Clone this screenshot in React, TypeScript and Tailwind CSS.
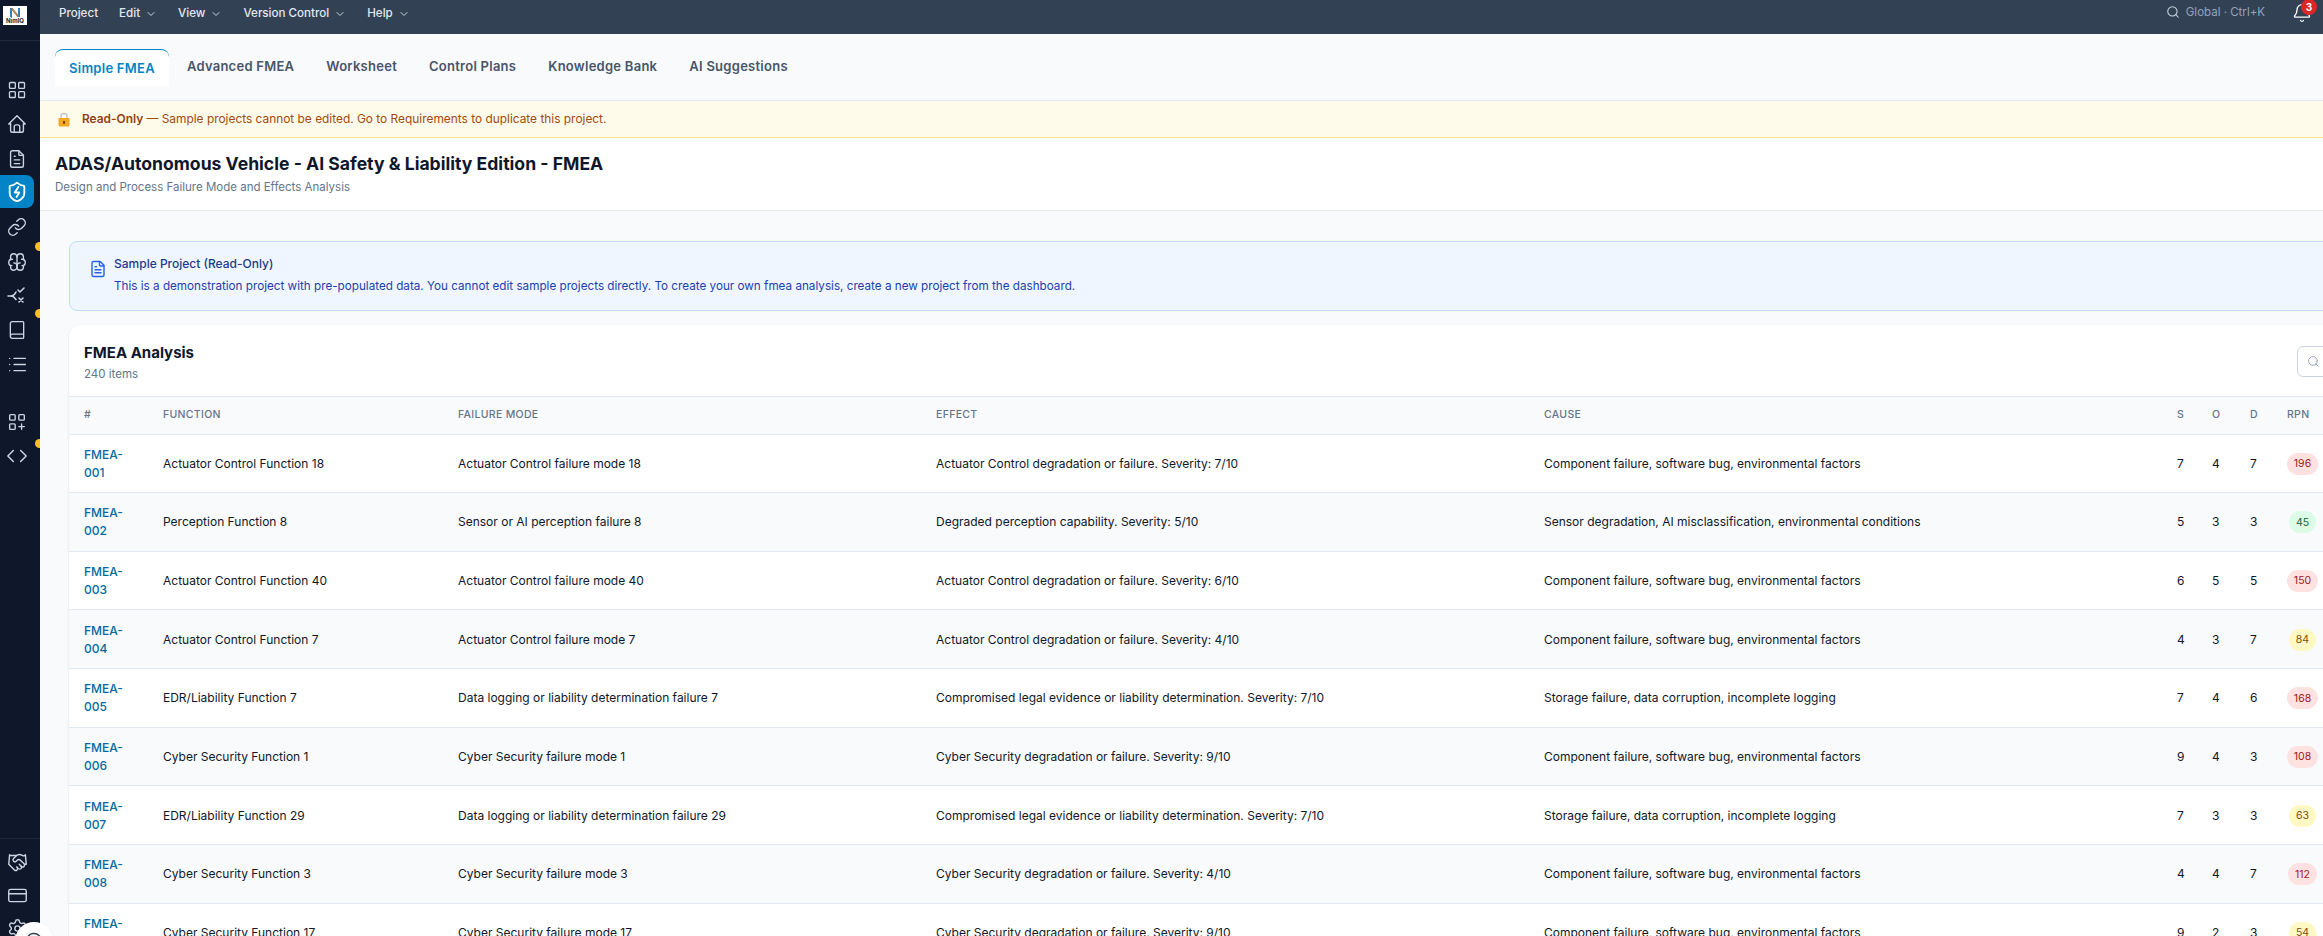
import {
  Bell,
  Book,
  ChevronDown,
  Code,
  CreditCard,
  FileText,
  Handshake,
  LayoutGrid,
  Link,
  List,
  MessageCircle,
  Search,
  Settings,
} from 'lucide-react';
import {
  TbBrain,
  TbFileText,
  TbHome,
  TbLayoutGridAdd,
} from 'react-icons/tb';

const menus = [
  { label: 'Project', caret: false },
  { label: 'Edit', caret: true },
  { label: 'View', caret: true },
  { label: 'Version Control', caret: true },
  { label: 'Help', caret: true },
];

const tabs = ['Simple FMEA', 'Advanced FMEA', 'Worksheet', 'Control Plans', 'Knowledge Bank', 'AI Suggestions'];

const actuatorCause = 'Component failure, software bug, environmental factors';

const rows = [
  { id: '001', fn: 'Actuator Control Function 18', mode: 'Actuator Control failure mode 18', effect: 'Actuator Control degradation or failure. Severity: 7/10', cause: actuatorCause, s: 7, o: 4, d: 7, rpn: 196 },
  { id: '002', fn: 'Perception Function 8', mode: 'Sensor or AI perception failure 8', effect: 'Degraded perception capability. Severity: 5/10', cause: 'Sensor degradation, AI misclassification, environmental conditions', s: 5, o: 3, d: 3, rpn: 45 },
  { id: '003', fn: 'Actuator Control Function 40', mode: 'Actuator Control failure mode 40', effect: 'Actuator Control degradation or failure. Severity: 6/10', cause: actuatorCause, s: 6, o: 5, d: 5, rpn: 150 },
  { id: '004', fn: 'Actuator Control Function 7', mode: 'Actuator Control failure mode 7', effect: 'Actuator Control degradation or failure. Severity: 4/10', cause: actuatorCause, s: 4, o: 3, d: 7, rpn: 84 },
  { id: '005', fn: 'EDR/Liability Function 7', mode: 'Data logging or liability determination failure 7', effect: 'Compromised legal evidence or liability determination. Severity: 7/10', cause: 'Storage failure, data corruption, incomplete logging', s: 7, o: 4, d: 6, rpn: 168 },
  { id: '006', fn: 'Cyber Security Function 1', mode: 'Cyber Security failure mode 1', effect: 'Cyber Security degradation or failure. Severity: 9/10', cause: actuatorCause, s: 9, o: 4, d: 3, rpn: 108 },
  { id: '007', fn: 'EDR/Liability Function 29', mode: 'Data logging or liability determination failure 29', effect: 'Compromised legal evidence or liability determination. Severity: 7/10', cause: 'Storage failure, data corruption, incomplete logging', s: 7, o: 3, d: 3, rpn: 63 },
  { id: '008', fn: 'Cyber Security Function 3', mode: 'Cyber Security failure mode 3', effect: 'Cyber Security degradation or failure. Severity: 4/10', cause: actuatorCause, s: 4, o: 4, d: 7, rpn: 112 },
  { id: '009', fn: 'Cyber Security Function 17', mode: 'Cyber Security failure mode 17', effect: 'Cyber Security degradation or failure. Severity: 9/10', cause: actuatorCause, s: 9, o: 2, d: 3, rpn: 54 },
];

function rpnClass(rpn: number) {
  if (rpn >= 100) return 'bg-[#fee2e2] text-[#991b1b]';
  if (rpn >= 50) return 'bg-[#fef9c3] text-[#854d0e]';
  return 'bg-[#dcfce7] text-[#166534]';
}

// branch with a check on top and a cross below, no package has this one
function BranchCheckIcon() {
  return (
    <svg width="20" height="20" viewBox="0 0 20 20" fill="none" stroke="currentColor" strokeWidth="1.6" strokeLinecap="round" strokeLinejoin="round">
      <path d="M1 10h3.500c2 0 3-1 4.500-4" />
      <path d="M4.500 10c2 0 3 1.500 4.500 3.500" />
      <path d="M11 4l2 2 4-4" />
      <path d="M12 12l4 4M16 12l-4 4" />
    </svg>
  );
}

function ShieldBoltIcon() {
  return (
    <svg width="22" height="22" viewBox="0 0 24 24" fill="none" stroke="currentColor" strokeWidth="2" strokeLinecap="round" strokeLinejoin="round">
      <path d="M20 13c0 5-3.500 7.500-7.660 8.950a1 1 0 0 1-.67-.01C7.500 20.500 4 18 4 13V6a1 1 0 0 1 1-1c2 0 4.500-1.200 6.240-2.720a1.170 1.170 0 0 1 1.520 0C14.510 3.810 17 5 19 5a1 1 0 0 1 1 1z" />
      <path d="M13.500 6.500L9.500 12.500h5l-3 5" />
    </svg>
  );
}

function SideItem({ children, active = false, dotClass = '' }: { children: React.ReactNode; active?: boolean; dotClass?: string }) {
  return (
    <div className="relative flex h-[34.3px] w-[40px] shrink-0 items-center">
      <div className={`flex h-[33px] w-[34px] items-center justify-center rounded-r-lg ${active ? 'bg-[#0284c7] text-white' : 'text-[#cbd5e1]'}`}>
        {children}
      </div>
      {dotClass && <span className={`absolute right-[0.5px] h-[9px] w-[4.5px] rounded-l-full bg-[#fbbf24] ${dotClass}`} />}
    </div>
  );
}

function Sidebar() {
  return (
    <aside className="relative flex h-full w-[40px] shrink-0 flex-col bg-[#0f172a]">
      <div className="flex h-[41px] shrink-0 items-start border-b border-[#1e293b] pl-[3px] pt-[6px]">
        <div className="flex h-[19px] w-[24px] flex-col items-center bg-white pt-[1px]">
          <svg width="12" height="11" viewBox="0 0 12 11">
            <path d="M1 10V1h2.500L9 8V1h2v9H8.500L3 3v7z" fill="#3f7ea6" />
            <path d="M3.500 1L9 8v2H8.500L3 3V1z" fill="#c9803f" />
          </svg>
          <span className="text-[6px] font-bold leading-[6px] text-[#1e293b]">NimIQ</span>
        </div>
      </div>
      <div className="flex flex-col pt-[32px]">
        <SideItem><LayoutGrid size={20} strokeWidth={1.6} /></SideItem>
        <SideItem><TbHome size={22} strokeWidth={1.5} /></SideItem>
        <SideItem><TbFileText size={22} strokeWidth={1.5} /></SideItem>
        <div className="-mt-[1.500px] mb-[1.500px]">
          <SideItem active><ShieldBoltIcon /></SideItem>
        </div>
        <SideItem><Link size={20} strokeWidth={1.7} /></SideItem>
        <SideItem dotClass="-top-[2.500px]"><TbBrain size={22} strokeWidth={1.5} /></SideItem>
        <SideItem><BranchCheckIcon /></SideItem>
        <SideItem dotClass="-top-[4.500px]"><Book size={20} strokeWidth={1.6} /></SideItem>
        <SideItem><List size={21} strokeWidth={1.6} /></SideItem>
        <div className="h-[23px] shrink-0" />
        <SideItem><TbLayoutGridAdd size={22} strokeWidth={1.5} /></SideItem>
        <SideItem dotClass="top-0"><Code size={22} strokeWidth={1.6} /></SideItem>
      </div>
      <div className="mt-auto flex h-[98px] shrink-0 flex-col -space-y-[1px] border-t border-[#1e293b] pt-[6px]">
        <SideItem><Handshake size={21} strokeWidth={1.6} /></SideItem>
        <SideItem><CreditCard size={21} strokeWidth={1.6} /></SideItem>
        <SideItem><Settings size={21} strokeWidth={1.6} /></SideItem>
      </div>
    </aside>
  );
}

export default function App() {
  return (
    <div className="relative flex h-[936px] w-[2323px] overflow-hidden bg-[#f8fafc] font-['Inter',sans-serif] text-[12px] text-[#0f172a]">
      <Sidebar />

      <div className="flex min-w-0 flex-1 flex-col overflow-hidden">
        {/* Top menu */}
        <header className="flex h-[34px] shrink-0 items-start justify-between bg-[#334155] pl-[19px] pr-[11px]">
          <nav className="flex gap-[21px] pt-[4px] text-[11.6px] font-medium leading-[19px] text-[#e2e8f0]">
            {menus.map(m => (
              <span key={m.label} className="flex items-center gap-[5px]">
                {m.label}
                {m.caret && <ChevronDown size={12} strokeWidth={2} className="text-[#cbd5e1]" />}
              </span>
            ))}
          </nav>
          <div className="flex items-start">
            <Search size={14} strokeWidth={1.8} className="mt-[5px] text-[#cbd5e1]" />
            <span className="ml-[6px] mt-[3px] text-[11.5px] leading-[18px] text-[#94a3b8]">Global · Ctrl+K</span>
            <div className="relative ml-[27px] mt-[3px] h-[22px] w-[20px] text-white">
              <Bell size={20} strokeWidth={1.6} />
              <span className="absolute -right-[5px] -top-[4px] flex h-[16px] w-[16px] items-center justify-center rounded-full bg-[#dc2626] text-[10px] font-bold leading-none text-white">3</span>
            </div>
          </div>
        </header>

        {/* Tabs */}
        <div className="flex h-[67px] shrink-0 items-start gap-1 border-b border-[#e2e8f0] bg-[#f8fafc] pl-[15px] pt-[15px]">
          {tabs.map((t, i) => (
            <div
              key={t}
              className={
                i === 0
                  ? 'flex h-[37px] items-center rounded-t-lg border-t border-[#0284c7] bg-white px-[14px] pt-[2px] text-[13px] font-semibold tracking-[0.02em] text-[#0284c7]'
                  : 'flex h-[35px] items-center px-[14px] text-[13px] font-semibold tracking-[0.02em] text-[#475569]'
              }
            >
              {t}
            </div>
          ))}
        </div>

        {/* Read-only banner */}
        <div className="flex h-[37px] shrink-0 items-center gap-[12px] border-b border-[#fde68a] bg-[#fffbeb] pl-[18px] text-[11.9px] text-[#a34a0c]">
          <svg width="12" height="15" viewBox="0 0 12 15">
            <path d="M3 7V4.500a3 3 0 0 1 6 0V7" fill="none" stroke="#c4c9d0" strokeWidth="1.500" />
            <rect x="0.500" y="6" width="11" height="8.500" rx="1" fill="#f5a623" />
            <rect x="5" y="9" width="2" height="3" fill="#7c4a03" />
          </svg>
          <span>
            <span className="font-semibold text-[#92400e]">Read-Only</span> — Sample projects cannot be edited. Go to Requirements to duplicate this project.
          </span>
        </div>

        {/* Page title */}
        <div className="flex h-[73px] shrink-0 flex-col border-b border-[#e2e8f0] bg-white pl-[15px] pt-[13px]">
          <h1 className="text-[17.6px] font-bold leading-[26px] text-[#0f172a]">ADAS/Autonomous Vehicle - AI Safety &amp; Liability Edition - FMEA</h1>
          <p className="text-[11.5px] leading-[20px] text-[#64748b]">Design and Process Failure Mode and Effects Analysis</p>
        </div>

        {/* Body */}
        <main className="flex w-[2400px] flex-col pl-[29px] pt-[30px]">
          <div className="flex h-[70px] w-[2283px] shrink-0 gap-[7px] rounded-lg border border-[#bfdbfe] bg-[#eff6ff] pl-[19px] pt-[12px]">
            <FileText size={18} strokeWidth={1.9} className="mt-[6px] text-[#2563eb]" />
            <div>
              <p className="text-[12px] font-medium leading-[20px] text-[#1e3a8a]">Sample Project (Read-Only)</p>
              <p className="mt-[2px] text-[11.7px] leading-[20px] text-[#1e40af]">
                This is a demonstration project with pre-populated data. You cannot edit sample projects directly. To create your own fmea analysis, create a new project from the dashboard.
              </p>
            </div>
          </div>

          <section className="mt-[14px] w-[2283px] rounded-xl bg-white shadow-sm">
            <div className="flex h-[72px] items-start justify-between border-b border-[#e2e8f0] pl-[15px] pr-[15px] pt-[17px]">
              <div>
                <h2 className="text-[15px] font-bold leading-[22px] text-[#0f172a]">FMEA Analysis</h2>
                <p className="text-[11.5px] leading-[20px] text-[#64748b]">240 items</p>
              </div>
              <div className="mt-[4px] flex h-[31px] w-[40px] items-center rounded-md border border-[#cbd5e1] pl-[9px]">
                <Search size={13} strokeWidth={1.8} className="text-[#94a3b8]" />
              </div>
            </div>

            <table className="w-[2264px] table-fixed border-collapse">
              <colgroup>
                <col className="w-[79px]" />
                <col className="w-[295px]" />
                <col className="w-[478px]" />
                <col className="w-[608px]" />
                <col className="w-[633px]" />
                <col className="w-[35px]" />
                <col className="w-[38px]" />
                <col className="w-[37px]" />
                <col className="w-[61px]" />
              </colgroup>
              <thead>
                <tr className="h-[37px] border-b border-[#e2e8f0] bg-[#f8fafc] pt-[1px] text-left text-[10.5px] font-medium uppercase tracking-[0.03em] text-[#64748b]">
                  {['#', 'Function', 'Failure Mode', 'Effect', 'Cause', 'S', 'O', 'D', 'RPN'].map(h => (
                    <th key={h} className="pl-[15px] font-medium">{h}</th>
                  ))}
                </tr>
              </thead>
              <tbody>
                {rows.map((r, i) => (
                  <tr key={r.id} className={`h-[58.67px] border-b border-[#e2e8f0] ${i % 2 === 1 ? 'bg-[#f8fafc]' : 'bg-white'}`}>
                    <td className="pl-[15px] pr-[20px] pt-[1px] font-medium leading-[18px] text-[#0369a1]">FMEA-{r.id}</td>
                    <td className="pl-[15px] pt-[1px]">{r.fn}</td>
                    <td className="pl-[15px] pt-[1px]">{r.mode}</td>
                    <td className="pl-[15px] pt-[1px]">{r.effect}</td>
                    <td className="pl-[15px] pt-[1px]">{r.cause}</td>
                    <td className="pl-[15px] pt-[1px]">{r.s}</td>
                    <td className="pl-[15px] pt-[1px]">{r.o}</td>
                    <td className="pl-[15px] pt-[1px]">{r.d}</td>
                    <td className="pt-[1px] text-center">
                      <span className={`inline-flex h-[22px] items-center rounded-full px-[7px] text-[10.5px] ${rpnClass(r.rpn)}`}>{r.rpn}</span>
                    </td>
                  </tr>
                ))}
              </tbody>
            </table>
          </section>
        </main>
      </div>

      {/* Floating help button, cut off by the window */}
      <div className="absolute left-[15px] top-[922px] flex h-[38px] w-[38px] justify-center rounded-full bg-white pt-[10px] shadow-md">
        <MessageCircle size={18} className="text-[#334155]" />
      </div>
    </div>
  );
}
